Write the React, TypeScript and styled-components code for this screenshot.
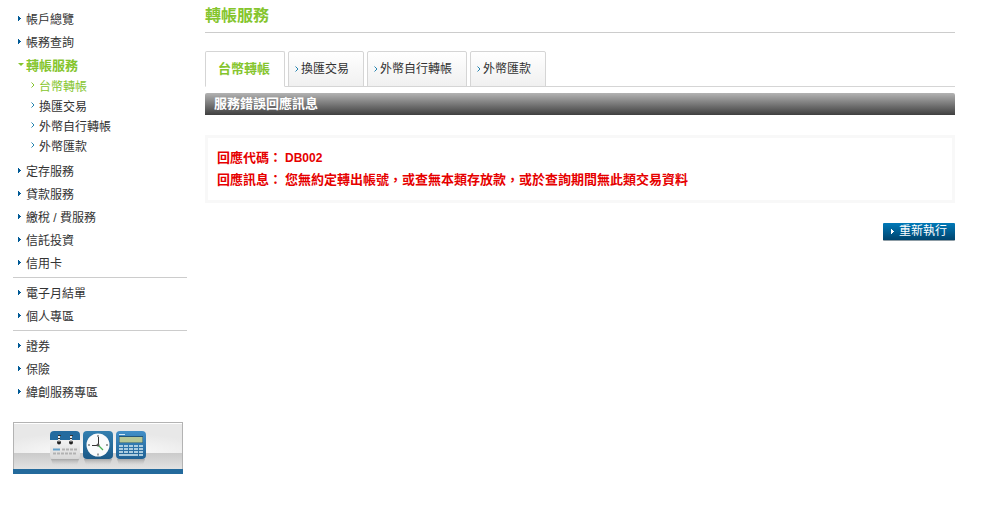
import React from "react";
import styled, { createGlobalStyle, css } from "styled-components";

const GREEN = "#85c52d";

const GlobalStyle = createGlobalStyle`
  * { box-sizing: border-box; }
  body {
    margin: 0;
    background: #fff;
    color: #333;
    font: 12px/20px "Liberation Sans", Arial, "Noto Sans CJK TC", sans-serif;
  }
  ul, h1, h2, p { margin: 0; padding: 0; }
  ul { list-style: none; }
  a { color: inherit; text-decoration: none; }
`;

const Page = styled.div`
  display: flex;
  align-items: flex-start;
  gap: 18px;
  padding: 0 53px 20px 13px;
`;

const Sidebar = styled.nav`
  flex: 0 0 174px;
  padding-top: 8px;
`;

const MenuGroup = styled.ul`
  & + & {
    border-top: 1px solid #ccc;
    padding-top: 4px;
    margin-top: 2px;
  }
`;

const activeText = css`
  color: ${GREEN};
  font-size: 13px;
  font-weight: bold;
`;

const MenuLink = styled.a<{ $active?: boolean }>`
  display: grid;
  grid-template-columns: 8px 1fr;
  align-items: center;
  height: 23px;
  padding-left: 5px;
  white-space: nowrap;
  svg { margin-bottom: 2px; }
  ${(p) => p.$active && activeText}
`;

const SubMenu = styled.ul`
  padding-bottom: 3px;
`;

const SubLink = styled.a<{ $active?: boolean }>`
  display: flex;
  align-items: center;
  gap: 4px;
  height: 20px;
  padding-left: 18px;
  color: ${(p) => (p.$active ? GREEN : "inherit")};
  svg { margin-bottom: 4px; }
`;

const Banner = styled.a`
  display: block;
  width: 170px;
  height: 52px;
  margin-top: 18px;
  svg { display: block; }
`;

const Main = styled.main`
  flex: 1;
  min-width: 0;
`;

const Title = styled.h1`
  height: 33px;
  padding-top: 6px;
  border-bottom: 1px solid #ccc;
  color: ${GREEN};
  font-size: 16px;
  line-height: 20px;
`;

const Tabs = styled.div`
  display: flex;
  gap: 3px;
  margin-top: 18px;
  box-shadow: inset 0 -1px #d5d5d5;
`;

const Tab = styled.a<{ $active?: boolean }>`
  display: flex;
  align-items: center;
  gap: 2px;
  height: 36px;
  padding: 0 14px 0 6px;
  border: 1px solid #d5d5d5;
  border-radius: 2px 2px 0 0;
  background: linear-gradient(#fff, #f0f0f0);
  white-space: nowrap;
  ${(p) =>
    p.$active &&
    css`
      padding: 0 14px 0 12px;
      border-bottom-color: #fff;
      background: #fff;
      ${activeText}
    `}
`;

const SectionBar = styled.h2`
  height: 22px;
  margin-top: 6px;
  padding-left: 9px;
  border-radius: 2px 2px 0 0;
  background: linear-gradient(#b3b3b3, #3f3f3f);
  color: #fff;
  font-size: 13px;
  line-height: 21px;
`;

const MessageBox = styled.section`
  margin-top: 20px;
  padding: 9px;
  border: 3px solid #f8f8f8;
  color: #e60000;
  font-size: 13px;
  font-weight: bold;
  line-height: 22px;
`;

const MessageRow = styled.p`
  display: flex;
  gap: 3px;
`;

const Label = styled.span`
  flex: none;
`;

const Code = styled.span`
  font-size: 12px;
`;

const Actions = styled.div`
  display: flex;
  justify-content: flex-end;
  margin-top: 20px;
`;

const RetryButton = styled.button`
  display: flex;
  align-items: center;
  gap: 5px;
  height: 18px;
  padding: 0 8px;
  border: 0;
  border-bottom: 1px solid #8d9ca5;
  border-radius: 1px;
  background: linear-gradient(#0079b8, #00446e);
  color: #fff;
  font: inherit;
  line-height: 17px;
  cursor: pointer;
`;

const RightTriangle = ({ fill = "#005a96" }: { fill?: string }) => (
  <svg width="3" height="5" viewBox="0 0 3 5" shapeRendering="crispEdges" aria-hidden="true">
    <path d="M0 0h1v1h1v1h1v1H2v1H1v1H0z" fill={fill} />
  </svg>
);

const DownTriangle = () => (
  <svg width="6" height="3" viewBox="0 0 6 3" aria-hidden="true">
    <path d="M0 0h6L3 3z" fill={GREEN} />
  </svg>
);

const Chevron = ({ color = "#2383b0" }: { color?: string }) => (
  <svg width="4" height="6" viewBox="0 0 4 6" aria-hidden="true">
    <path d="M.5.5 3 3 .5 5.5" fill="none" stroke={color} />
  </svg>
);

const rows = (from: number, count: number, step: number) =>
  Array.from({ length: count }, (_, i) => from + i * step);

const ToolsArt = () => (
  <svg width="170" height="52" viewBox="0 0 170 52" aria-hidden="true">
    <defs>
      <radialGradient id="wall" cx=".5" cy="1" r=".7">
        <stop offset="0" stopColor="#fff" />
        <stop offset="1" stopColor="#e8e8e8" />
      </radialGradient>
      <linearGradient id="floor" x2="0" y2="1">
        <stop stopColor="#cacaca" />
        <stop offset="1" stopColor="#e2e2e2" />
      </linearGradient>
      <linearGradient id="blue" x2="0" y2="1">
        <stop stopColor="#337fb0" />
        <stop offset="1" stopColor="#1c5a88" />
      </linearGradient>
      <linearGradient id="calc" x2="0" y2="1">
        <stop stopColor="#428fc8" />
        <stop offset="1" stopColor="#1f6194" />
      </linearGradient>
      <linearGradient id="paper" x2="0" y2="1">
        <stop stopColor="#fff" />
        <stop offset="1" stopColor="#d8d8d8" />
      </linearGradient>
      <linearGradient id="shade" x2="0" y2="1">
        <stop stopColor="#888" stopOpacity=".6" />
        <stop offset="1" stopColor="#bbb" stopOpacity="0" />
      </linearGradient>
    </defs>
    <rect width="170" height="52" fill="#b3b3b3" />
    <rect x="1" y="1" width="168" height="31" fill="url(#wall)" />
    <path d="M1 1.5h168" stroke="#fff" />
    <rect x="1" y="31" width="168" height="16" fill="url(#floor)" />
    <rect y="47" width="170" height="5" fill="#246a9c" />
    <path d="M38 37h28l-2 6H40zM71 37h28l-2 6H73zM104 37h28l-2 6h-24z" fill="url(#shade)" />

    <rect x="37" y="9" width="30" height="28" rx="4" fill="url(#paper)" />
    <path d="M37 18v-5a4 4 0 0 1 4-4h22a4 4 0 0 1 4 4v5z" fill="#246b9f" />
    {[46, 58].map((x) => (
      <g key={x}>
        <path d={`M${x} 14v6`} stroke="#e8e8e8" strokeWidth="2" />
        <path d={`M${x - 1} 13.5h3M${x - 1} 16.5h2`} stroke="#333" />
        <circle cx={x} cy="20.5" r="2" fill="#222" />
        <circle cx={x} cy="19" r=".8" fill="#ddd" />
      </g>
    ))}
    <path d="M40 27.5h7" stroke="#62a1cb" strokeWidth="2" />
    {rows(49, 4, 4).map((x) => <path key={x} d={`M${x} 27.5h3`} stroke="#b2b2b2" strokeWidth="2" />)}
    {rows(40, 6, 4).map((x) => <path key={x} d={`M${x} 31.5h3`} stroke="#b2b2b2" strokeWidth="2" />)}

    <rect x="70" y="9" width="30" height="28" rx="4" fill="url(#blue)" />
    <circle cx="85" cy="23" r="11.5" fill="#f9fbfc" />
    <path d="M85 13v2M85 31.5v2M75 23h2M93 23h2" stroke="#444" />
    <path d="M85.5 15v8.500H79" fill="none" stroke="#333" />
    <path d="m85 23 5 5" stroke="#4baf54" strokeWidth="1.300" />
    <circle cx="85" cy="23" r="1.500" fill="#555" />

    <rect x="103" y="9" width="30" height="28" rx="4" fill="url(#calc)" />
    <path d="M106 12.5h6" stroke="#d3e8f5" />
    <rect x="106" y="14" width="24" height="7" fill="#23567b" />
    <rect x="106.500" y="15" width="23" height="5.500" fill="#b6c796" />
    {rows(24, 4, 3).map((y) =>
      rows(106, 5, 5).map((x) => (
        <path key={`${x}-${y}`} d={`M${x} ${y}h${y === 33 && x < 121 ? 5 : 4}`} stroke="#d9edf5" strokeWidth="1.500" />
      ))
    )}
  </svg>
);

const SUB_ITEMS = ["台幣轉帳", "換匯交易", "外幣自行轉帳", "外幣匯款"];

const MENU = [
  ["帳戶總覽", "帳務查詢", "轉帳服務", "定存服務", "貸款服務", "繳稅 / 費服務", "信託投資", "信用卡"],
  ["電子月結單", "個人專區"],
  ["證券", "保險", "緯創服務專區"],
];

export default function App() {
  return (
    <>
      <GlobalStyle />
      <Page>
        <Sidebar>
          {MENU.map((group) => (
            <MenuGroup key={group[0]}>
              {group.map((item) => {
                const active = item === "轉帳服務";
                return (
                  <li key={item}>
                    <MenuLink href="#" $active={active}>
                      {active ? <DownTriangle /> : <RightTriangle />}
                      {item}
                    </MenuLink>
                    {active && (
                      <SubMenu>
                        {SUB_ITEMS.map((sub, i) => (
                          <li key={sub}>
                            <SubLink href="#" $active={i === 0}>
                              <Chevron color={i === 0 ? GREEN : undefined} />
                              {sub}
                            </SubLink>
                          </li>
                        ))}
                      </SubMenu>
                    )}
                  </li>
                );
              })}
            </MenuGroup>
          ))}
          <Banner href="#">
            <ToolsArt />
          </Banner>
        </Sidebar>
        <Main>
          <Title>轉帳服務</Title>
          <Tabs>
            {SUB_ITEMS.map((tab, i) => (
              <Tab key={tab} href="#" $active={i === 0}>
                {i > 0 && <Chevron />}
                {tab}
              </Tab>
            ))}
          </Tabs>
          <SectionBar>服務錯誤回應訊息</SectionBar>
          <MessageBox>
            <MessageRow>
              <Label>回應代碼：</Label>
              <Code>DB002</Code>
            </MessageRow>
            <MessageRow>
              <Label>回應訊息：</Label>
              <span>您無約定轉出帳號，或查無本類存放款，或於查詢期間無此類交易資料</span>
            </MessageRow>
          </MessageBox>
          <Actions>
            <RetryButton type="button">
              <RightTriangle fill="#fff" />
              重新執行
            </RetryButton>
          </Actions>
        </Main>
      </Page>
    </>
  );
}
